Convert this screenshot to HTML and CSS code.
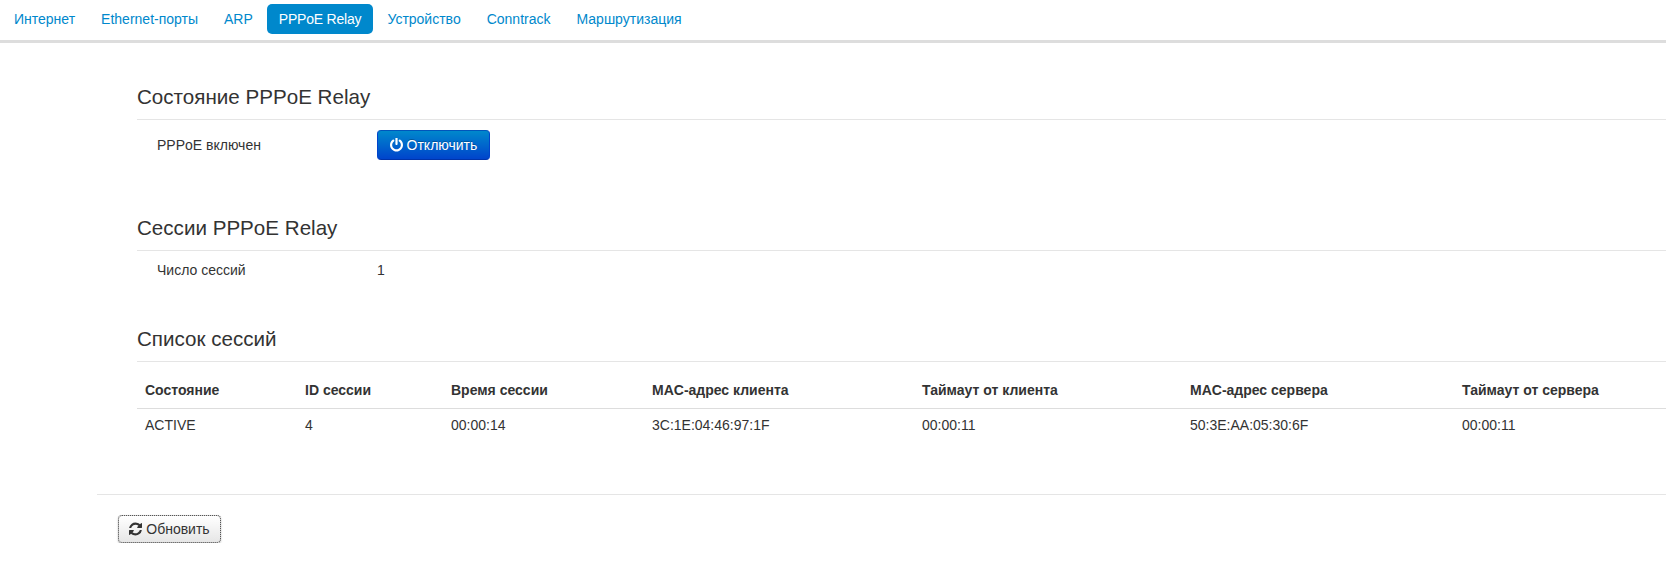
FILE: index.html
```html
<!DOCTYPE html>
<html lang="ru">
<head>
<meta charset="utf-8">
<title>PPPoE Relay</title>
<link rel="stylesheet" href="styles.css">
</head>
<body>
<nav class="topnav">
  <a class="pill" href="#">Интернет</a>
  <a class="pill" href="#">Ethernet-порты</a>
  <a class="pill" href="#">ARP</a>
  <a class="pill active" href="#">PPPoE Relay</a>
  <a class="pill" href="#">Устройство</a>
  <a class="pill" href="#">Conntrack</a>
  <a class="pill" href="#">Маршрутизация</a>
</nav>
<main class="content">
  <section class="block block-state">
    <h2 class="title">Состояние PPPoE Relay</h2>
    <div class="row row-state">
      <span class="label">PPPoE включен</span>
      <button class="btn btn-primary" type="button"><svg class="icon" viewBox="128 100 1536 1600"><path fill="currentColor" d="M1664 896q0 156-61 298t-164 245-245 164-298 61-298-61-245-164-164-245-61-298q0-182 80.5-343t226.5-270q43-32 95.5-25t83.5 50q32 42 24.5 94.5t-49.5 84.5q-98 74-151.5 181t-53.5 228q0 104 40.5 198.5t109.5 163.5 163.5 109.5 198.5 40.5 198.5-40.5 163.5-109.5 109.5-163.5 40.5-198.5q0-121-53.5-228t-151.5-181q-42-32-49.5-84.5t24.5-94.5q31-43 84-50t95 25q146 109 226.5 270t80.5 343zm-640-768v640q0 52-38 90t-90 38-90-38-38-90v-640q0-52 38-90t90-38 90 38 38 90z"/></svg> Отключить</button>
    </div>
  </section>
  <section class="block block-sessions">
    <h2 class="title">Сессии PPPoE Relay</h2>
    <div class="row row-count">
      <span class="label">Число сессий</span>
      <span class="value">1</span>
    </div>
  </section>
  <section class="block block-list">
    <h2 class="title">Список сессий</h2>
    <table class="sessions">
      <colgroup>
        <col class="c1"><col class="c2"><col class="c3"><col class="c4"><col class="c5"><col class="c6"><col class="c7">
      </colgroup>
      <thead>
        <tr><th>Состояние</th><th>ID сессии</th><th>Время сессии</th><th>MAC-адрес клиента</th><th>Таймаут от клиента</th><th>MAC-адрес сервера</th><th>Таймаут от сервера</th></tr>
      </thead>
      <tbody>
        <tr><td>ACTIVE</td><td>4</td><td>00:00:14</td><td>3C:1E:04:46:97:1F</td><td>00:00:11</td><td>50:3E:AA:05:30:6F</td><td>00:00:11</td></tr>
      </tbody>
    </table>
  </section>
  <footer class="actions">
    <button class="btn btn-default" type="button"><svg class="icon" viewBox="128 128 1536 1536"><path fill="currentColor" d="M1639 1056q0 5-1 7-64 268-268 434.5t-478 166.5q-146 0-282.5-55t-243.5-157l-129 129q-19 19-45 19t-45-19-19-45v-448q0-26 19-45t45-19h448q26 0 45 19t19 45-19 45l-137 137q71 66 161 102t187 36q134 0 250-65t186-179q11-17 53-117 8-23 30-23h192q13 0 22.5 9.5t9.5 22.5zm25-800v448q0 26-19 45t-45 19h-448q-26 0-45-19t-19-45 19-45l138-138q-148-137-349-137-134 0-250 65t-186 179q-11 17-53 117-8 23-30 23h-199q-13 0-22.5-9.5t-9.5-22.5v-7q65-268 270-434.5t480-166.5q146 0 284 55.5t245 156.5l130-129q19-19 45-19t45 19 19 45z"/></svg> Обновить</button>
  </footer>
</main>
</body>
</html>
```

FILE: styles.css
```css
* { box-sizing: border-box; }
html, body { margin: 0; padding: 0; }
body {
  background: #fff;
  color: #333;
  font-family: "Liberation Sans", Arial, sans-serif;
  font-size: 14px;
  line-height: 20px;
  overflow: hidden;
}
.topnav {
  display: flex;
  gap: 2px;
  height: 43px;
  padding: 4px 2px 0;
  border-bottom: 3px solid #ddd;
  align-items: flex-start;
}
.pill {
  display: block;
  padding: 5px 12px;
  color: #0088cc;
  text-decoration: none;
  border-radius: 5px;
}
.pill.active { background: #0088cc; color: #fff; letter-spacing: -0.2px; }
.content { margin-left: 97px; }
.block { margin-left: 40px; }
.block-state { padding-top: 43px; }
.block-sessions { padding-top: 57px; }
.block-list { padding-top: 48px; }
.title {
  margin: 0;
  padding-bottom: 11px;
  font-size: 20.6px;
  font-weight: 400;
  line-height: 22px;
  border-bottom: 1px solid #e5e5e5;
}
.row { display: flex; align-items: center; padding-left: 20px; }
.row-state { padding-top: 10px; }
.row-count { padding-top: 9px; }
.label { width: 220px; }
.btn {
  display: inline-block;
  font-family: inherit;
  font-size: 14px;
  line-height: 20px;
  border-radius: 4px;
  cursor: pointer;
}
.icon { width: 13px; height: 14px; vertical-align: -2px; }
.btn-primary {
  width: 113px;
  height: 30px;
  padding: 0;
  color: #fff;
  border: 1px solid #0044aa;
  border-color: #0055bb #0044cc #0033aa;
  background: linear-gradient(to bottom, #0088cc, #0044cc);
  text-shadow: 0 -1px 0 rgba(0,0,0,.25);
}
.sessions {
  width: 100%;
  table-layout: fixed;
  border-collapse: collapse;
  margin-top: 9px;
}
.sessions th, .sessions td { text-align: left; line-height: 20px; }
.sessions th { padding: 9px 8px 8px; border-bottom: 1px solid #ddd; }
.sessions td { padding: 6px 8px 8px; }
.c1 { width: 160px; }
.c2 { width: 146px; }
.c3 { width: 201px; }
.c4 { width: 270px; }
.c5 { width: 268px; }
.c6 { width: 272px; }
.actions {
  margin-top: 51px;
  padding: 20px 0 0 21px;
  border-top: 1px solid #e5e5e5;
}
.btn-default {
  width: 103px;
  height: 28px;
  padding: 0;
  color: #333;
  border: 1px solid #ccc;
  background: linear-gradient(to bottom, #fff, #e6e6e6);
  outline: 1px dotted #555;
  outline-offset: -1px;
  box-shadow: 0 1px 2px rgba(0,0,0,.25);
}
```
